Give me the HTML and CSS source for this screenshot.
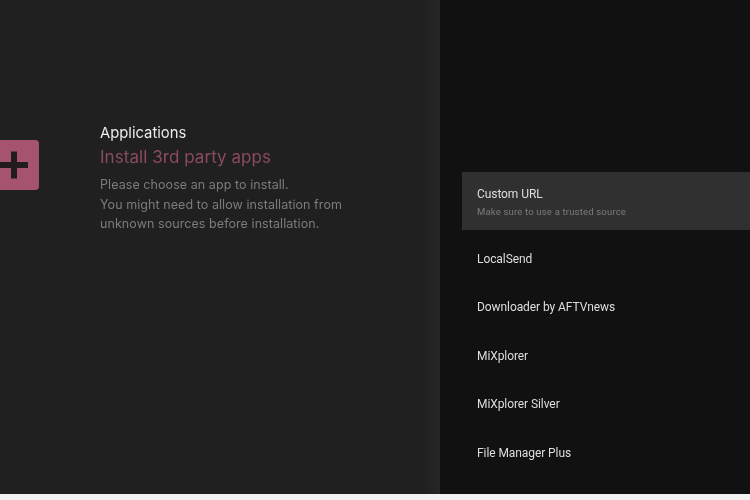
FILE: index.html
```html
<!DOCTYPE html>
<html lang="en">
<head>
<meta charset="utf-8">
<title>Install 3rd party apps</title>
<link rel="stylesheet" href="styles.css">
</head>
<body>
<main class="screen">
  <section class="info">
    <div class="tile">
      <svg class="plus" viewBox="0 0 30 30" width="30" height="30" aria-hidden="true"><path d="M12 1.500h6V12h11v6H18v10.500h-6V18H1v-6h11z"/></svg>
    </div>
    <div class="copy">
      <p class="eyebrow">Applications</p>
      <h1 class="title">Install 3rd party apps</h1>
      <p class="desc">Please choose an app to install.<br>You might need to allow installation from<br>unknown sources before installation.</p>
    </div>
  </section>
  <section class="list">
    <div class="row row-active">
      <span class="row-name">Custom URL</span>
      <span class="row-sub">Make sure to use a trusted source</span>
    </div>
    <div class="row"><span class="row-name">LocalSend</span></div>
    <div class="row"><span class="row-name">Downloader by AFTVnews</span></div>
    <div class="row"><span class="row-name">MiXplorer</span></div>
    <div class="row"><span class="row-name">MiXplorer Silver</span></div>
    <div class="row"><span class="row-name">File Manager Plus</span></div>
  </section>
</main>
</body>
</html>
```
FILE: styles.css
```css
* { box-sizing: border-box; }
html, body { margin: 0; height: 100%; background: #f2f2f2; }
body { overflow: hidden; font-family: Inter, "Noto Sans", "Liberation Sans", sans-serif; }
.screen { display: flex; width: 750px; height: 494px; overflow: hidden; }
.info { display: flex; align-items: flex-start; width: 440px; padding-top: 123px; background: linear-gradient(90deg, #202021 96%, #262626 100%); }
.tile { display: flex; align-items: center; justify-content: center; flex: none; width: 39px; height: 50px; margin-top: 17px; background: #a5536f; border-radius: 0 4px 4px 0; }
.plus { fill: #221c1f; margin-left: -11px; }
.copy { margin-left: 61px; filter: blur(0.3px); }
.eyebrow { margin: 0; font-size: 14.8px; line-height: 21px; color: #ececec; }
.title { margin: 1px 0 0; font-size: 17px; line-height: 24px; font-weight: 400; color: #8b4a63; letter-spacing: 0.05px; }
.desc { margin: 6px 0 0; font-size: 12.5px; line-height: 19.7px; color: #7c7c7c; letter-spacing: 0.07px; }
.list { flex: 1; padding: 172px 0 0 22px; background: #111112; }
.row { display: flex; flex-direction: column; justify-content: center; height: 48.5px; padding: 1px 0 0 15px; }
.row-active { height: 58px; margin-bottom: 3.75px; background: #303030; }
.row-name { font-family: Roboto, "Liberation Sans", sans-serif; font-size: 12px; line-height: 18px; color: #dedede; letter-spacing: -0.08px; filter: blur(0.3px); }
.row-sub { margin-top: 2px; font-family: Roboto, "Liberation Sans", sans-serif; font-size: 9.5px; line-height: 13px; color: #7b7b7b; letter-spacing: 0.18px; filter: blur(0.3px); }
```
